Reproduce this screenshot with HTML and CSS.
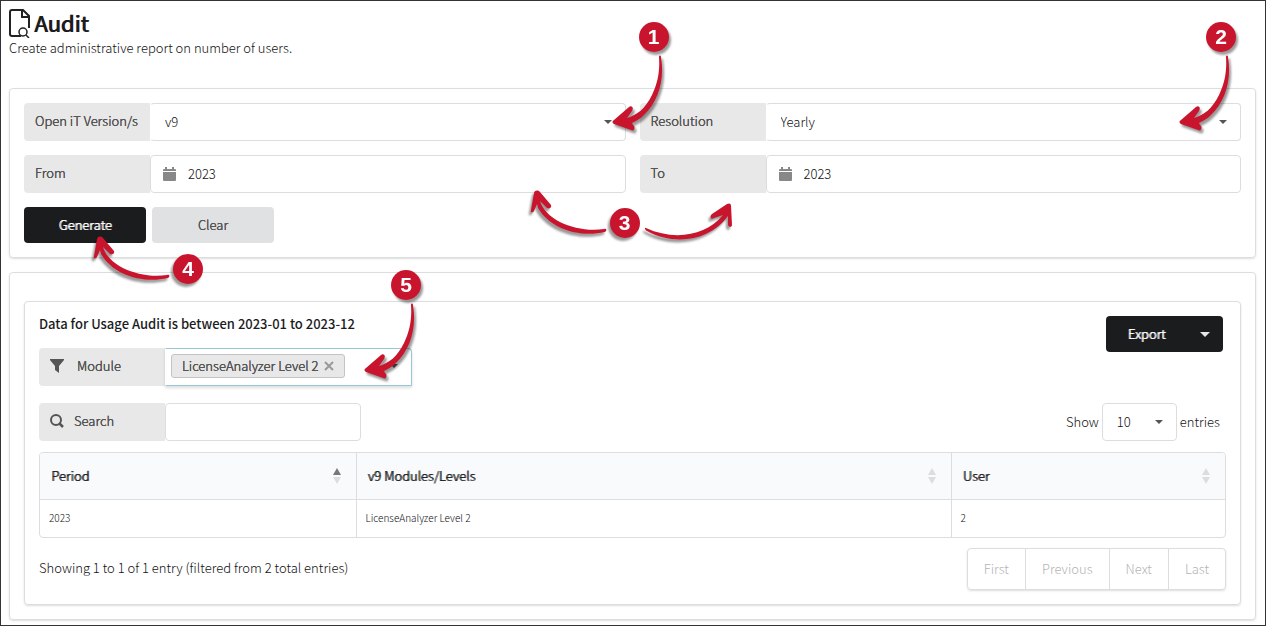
FILE: index.html
```html
<!DOCTYPE html>
<html lang="en">
<head>
    <meta charset="UTF-8">
    <meta name="viewport" content="width=device-width, initial-scale=1.0">
    <title>Audit</title>
    <link rel="stylesheet" href="styles.css">
</head>
<body>
    <!-- Shared shapes for the callouts and sort arrows -->
    <svg class="shapes" aria-hidden="true">
        <symbol id="arrow-down" viewBox="0 0 64 116">
            <path d="M48 35 C48 33 50 33 50 35 C54 58 47 80 33 93 C29 97 25 99 21 101 L22 103 C25 105 23 110 20 108 L3 102 C1 101 1 99 3 98 L18 85 C21 83 23 86 21 89 L16 96 C26 93 34 87 41 73 C47 61 49 48 48 35 Z"/>
        </symbol>
        <symbol id="arrow-left" viewBox="0 0 112 56">
            <path d="M75 43 C50 49 20 40 8 19 L7 15 L4 22 C3 24 0 24 1 21 L4 4 C5 1 8 1 10 3 L21 16 C22 19 19 20 17 19 L10 12 C16 32 48 44 74 40 C77 39 77 42 75 43 Z"/>
        </symbol>
        <symbol id="arrow-right" viewBox="0 0 90 40">
            <path d="M2 25 C0 24 1 27 3 28 C30 43 66 38 84 13 L84 22 C85 25 88 24 88 22 L87 3 C87 0 85 0 83 1 L68 11 C65 14 67 17 70 15 L79 12 C62 33 30 38 2 25 Z"/>
        </symbol>
        <symbol id="sort" viewBox="0 0 8 16">
            <path class="sort-up" d="M4 0 L8 7 H0 Z"/>
            <path class="sort-down" d="M0 9 H8 L4 16 Z"/>
        </symbol>
    </svg>

    <main class="page">
        <!-- Page Title -->
        <header class="page-header">
            <h1>
                <svg class="title-icon" viewBox="0 0 22 30" aria-hidden="true">
                    <path d="M12 28 H3 Q1 28 1 26 V4 Q1 2 3 2 H14 L20 8 V20" fill="none" stroke="#222" stroke-width="2"/>
                    <path d="M13 2 V9 H20" fill="none" stroke="#222" stroke-width="2"/>
                    <circle cx="14" cy="24" r="4" fill="#fff" stroke="#222" stroke-width="1.5"/>
                    <path d="M17 27 L20 30" stroke="#222" stroke-width="1.5"/>
                </svg>
                Audit
            </h1>
            <p>Create administrative report on number of users.</p>
        </header>

        <!-- Report Form -->
        <form class="card report-form">
            <div class="field-grid">
                <div class="field">
                    <label for="version">Open iT Version/s</label>
                    <div class="select-wrap">
                        <select id="version"><option>v9</option></select>
                    </div>
                    <div class="callout callout-version">
                        <svg class="arrow"><use href="#arrow-down"/></svg>
                        <span class="badge">1</span>
                    </div>
                </div>
                <div class="field">
                    <label for="resolution">Resolution</label>
                    <div class="select-wrap">
                        <select id="resolution"><option>Yearly</option></select>
                    </div>
                    <div class="callout callout-resolution">
                        <svg class="arrow"><use href="#arrow-down"/></svg>
                        <span class="badge">2</span>
                    </div>
                </div>
                <div class="field">
                    <label for="from">From</label>
                    <div class="date-wrap">
                        <svg class="calendar" viewBox="0 0 13 14" aria-hidden="true"><path d="M0 4 V3 Q0 2 1 2 H2 V0 H4 V2 H9 V0 H11 V2 H12 Q13 2 13 3 V4 Z M0 5 H13 V13 Q13 14 12 14 H1 Q0 14 0 13 Z"/></svg>
                        <input type="text" id="from" value="2023">
                    </div>
                </div>
                <div class="field">
                    <label for="to">To</label>
                    <div class="date-wrap">
                        <svg class="calendar" viewBox="0 0 13 14" aria-hidden="true"><path d="M0 4 V3 Q0 2 1 2 H2 V0 H4 V2 H9 V0 H11 V2 H12 Q13 2 13 3 V4 Z M0 5 H13 V13 Q13 14 12 14 H1 Q0 14 0 13 Z"/></svg>
                        <input type="text" id="to" value="2023">
                    </div>
                    <div class="callout callout-dates">
                        <svg class="arrow arrow-side"><use href="#arrow-left"/></svg>
                        <span class="badge">3</span>
                        <svg class="arrow arrow-right"><use href="#arrow-right"/></svg>
                    </div>
                </div>
            </div>
            <div class="actions">
                <button type="button" class="btn btn-dark">Generate</button>
                <button type="button" class="btn btn-light">Clear</button>
                <div class="callout callout-generate">
                    <svg class="arrow arrow-side"><use href="#arrow-left"/></svg>
                    <span class="badge">4</span>
                </div>
            </div>
        </form>

        <!-- Results -->
        <section class="card results">
            <div class="card panel">
                <div class="panel-top">
                    <div>
                        <h2>Data for Usage Audit is between 2023-01 to 2023-12</h2>
                        <div class="field module-field">
                            <label for="module">
                                <svg class="label-icon" viewBox="0 0 14 14" aria-hidden="true"><path d="M0 0 H14 V1 L9 7 V14 L5 11 V7 L0 1 Z"/></svg>
                                Module
                            </label>
                            <div class="multi-select">
                                <span class="tag">LicenseAnalyzer Level 2
                                    <button type="button" aria-label="Remove LicenseAnalyzer Level 2"><svg viewBox="0 0 10 10"><path d="M1 1 L9 9 M9 1 L1 9"/></svg></button>
                                </span>
                                <input type="text" id="module">
                            </div>
                            <div class="callout callout-module">
                                <svg class="arrow"><use href="#arrow-down"/></svg>
                                <span class="badge">5</span>
                            </div>
                        </div>
                    </div>
                    <div class="export">
                        <button type="button" class="btn-export">Export</button>
                        <button type="button" class="btn-export-menu" aria-label="Export options"></button>
                    </div>
                </div>

                <div class="table-tools">
                    <div class="field search-field">
                        <label for="search">
                            <svg class="label-icon" viewBox="0 0 14 14" aria-hidden="true"><circle cx="6" cy="6" r="5" fill="none" stroke="#555" stroke-width="2"/><path d="M9 9 L13 13" stroke="#555" stroke-width="2.5"/></svg>
                            Search
                        </label>
                        <input type="text" id="search">
                    </div>
                    <label class="page-size">
                        Show
                        <span class="select-wrap"><select><option>10</option></select></span>
                        entries
                    </label>
                </div>

                <div class="table-wrap">
                    <table>
                        <thead>
                            <tr>
                                <th class="col-period"><div class="head sorted">Period <svg class="sort"><use href="#sort"/></svg></div></th>
                                <th class="col-modules"><div class="head">v9 Modules/Levels <svg class="sort"><use href="#sort"/></svg></div></th>
                                <th><div class="head">User <svg class="sort"><use href="#sort"/></svg></div></th>
                            </tr>
                        </thead>
                        <tbody>
                            <tr>
                                <td>2023</td>
                                <td>LicenseAnalyzer Level 2</td>
                                <td>2</td>
                            </tr>
                        </tbody>
                    </table>
                </div>

                <div class="table-footer">
                    <p>Showing 1 to 1 of 1 entry (filtered from 2 total entries)</p>
                    <nav class="pagination">
                        <button type="button" disabled>First</button>
                        <button type="button" disabled>Previous</button>
                        <button type="button" disabled>Next</button>
                        <button type="button" disabled>Last</button>
                    </nav>
                </div>
            </div>
        </section>
    </main>
</body>
</html>
```
FILE: styles.css
```css
/* General Reset */
* {
    box-sizing: border-box;
}

body, h1, h2, p {
    margin: 0;
}

body, button, input, select {
    font-family: "Noto Sans CJK SC", "Noto Sans", sans-serif;
    font-size: 13px;
    font-weight: 300;
    line-height: 20px;
    color: #111;
}

.shapes {
    position: absolute;
    width: 0;
    height: 0;
}

.page {
    min-height: 100vh;
    padding: 7px 9px 5px 8px;
    border: 1px solid #333;
    background: #fff;
}

/* Page Title */
.page-header {
    height: 80px;
}

h1 {
    display: flex;
    gap: 3px;
    height: 30px;
    font-size: 22px;
    font-weight: 400;
    line-height: 28px;
    color: #1b1c1d;
    text-shadow: 1px 0 0 currentColor;
}

.title-icon {
    width: 22px;
    height: 30px;
}

/* Cards */
.card {
    border: 1px solid #dcddde;
    border-radius: 4px;
    box-shadow: 0 1px 2px rgba(34, 36, 38, 0.15);
    padding: 14px;
}

.results {
    margin-top: 14px;
    padding-top: 28px;
}

/* Fields */
.field-grid {
    display: grid;
    grid-template-columns: 1fr 1fr;
    gap: 14px;
}

.field {
    position: relative;
    display: flex;
    height: 38px;
}

.field > label {
    display: flex;
    align-items: center;
    flex: 0 0 126px;
    padding: 0 11px 2px;
    border-radius: 4px 0 0 4px;
    background: #e8e8e8;
    white-space: nowrap;
}

/* Semi-bold look on the narrow light weight */
.field > label, .tag, .btn-light {
    color: #555;
    text-shadow: 0 0 0 currentColor, 0 0 0 currentColor;
}

.label-icon {
    flex: none;
    width: 14px;
    height: 14px;
    margin-right: 13px;
    fill: #555;
}

input, select {
    border: 1px solid #dcddde;
    border-radius: 4px;
    background: #fff;
    outline: none;
}

.select-wrap {
    position: relative;
    flex: 1;
}

.select-wrap select {
    appearance: none;
    width: 100%;
    height: 38px;
    padding: 0 14px;
    border-left-color: transparent;
}

.select-wrap::after, .multi-select::after, .btn-export-menu::after {
    content: "";
    border: 4px solid transparent;
    border-top-color: #555;
    border-bottom: 0;
}

.select-wrap::after {
    position: absolute;
    top: 17px;
    right: 14px;
}

.date-wrap {
    position: relative;
    flex: 1;
}

.date-wrap input {
    width: 100%;
    height: 38px;
    padding: 0 14px 2px 37px;
}

.calendar {
    position: absolute;
    top: 12px;
    left: 13px;
    width: 13px;
    height: 14px;
    fill: #888;
}

/* Buttons */
.actions {
    position: relative;
    display: flex;
    gap: 6px;
    margin-top: 14px;
}

button {
    border: 0;
    padding: 0;
    background: none;
}

.btn {
    width: 122px;
    height: 36px;
    border-radius: 4px;
}

.btn-dark {
    background: #1b1c1d;
}

.btn-dark, .btn-export {
    color: #fff;
    text-shadow: 1px 0 0 currentColor;
}

.btn-light {
    background: #e0e1e2;
}

/* Results Panel */
.panel-top, .table-tools, .table-footer {
    display: flex;
    justify-content: space-between;
    align-items: flex-start;
}

h2 {
    padding-bottom: 16px;
    font-size: 13px;
    font-weight: 500;
    line-height: 16px;
    color: #1b1c1d;
}

.module-field {
    width: 373px;
}

.multi-select {
    display: flex;
    align-items: center;
    flex: 1;
    min-width: 0;
    padding: 0 13px 2px 5px;
    border: 1px solid #96c8da;
    border-left-color: transparent;
    border-radius: 0 4px 0 0;
    box-shadow: 0 2px 3px rgba(34, 36, 38, 0.15);
}

.multi-select input {
    flex: 1;
    min-width: 0;
    border: 0;
}

.tag {
    display: flex;
    align-items: center;
    flex: none;
    gap: 5px;
    height: 24px;
    padding: 0 10px;
    border: 1px solid #c4c4c4;
    border-radius: 3px;
    background: #e8e8e8;
}

.tag button {
    display: flex;
}

.tag svg {
    width: 10px;
    height: 10px;
    stroke: #999;
    stroke-width: 2;
}

.export {
    display: flex;
    height: 36px;
    margin-right: 3px;
    border-radius: 4px;
    background: #1b1c1d;
}

.btn-export {
    width: 81px;
}

.btn-export-menu {
    display: flex;
    align-items: center;
    justify-content: center;
    width: 36px;
}

.btn-export-menu::after {
    border-width: 5px 5px 0;
    border-top-color: #e8e8e8;
}

/* Table Tools */
.table-tools {
    margin-top: 17px;
}

.search-field {
    width: 322px;
}

.search-field .label-icon {
    margin-right: 10px;
}

.search-field input {
    flex: 1;
    min-width: 0;
}

.page-size {
    display: flex;
    align-items: center;
    gap: 3px;
    margin-right: 6px;
}

.page-size .select-wrap {
    flex: 0 0 75px;
}

.page-size select {
    border-color: #dcddde;
}

/* Table */
.table-wrap {
    margin-top: 11px;
    border: 1px solid #dcddde;
    border-radius: 4px;
    overflow: hidden;
}

table {
    width: 100%;
    table-layout: fixed;
    border-collapse: collapse;
}

.col-period {
    width: 316px;
}

.col-modules {
    width: 595px;
}

th {
    height: 46px;
    padding: 0 15px 0 11px;
    border-bottom: 1px solid #dcddde;
    background: #f9fafb;
    font-weight: 300;
    text-align: left;
    color: #1b1c1d;
    text-shadow: 1px 0 0 currentColor;
}

td {
    height: 38px;
    padding: 0 9px;
    font-size: 10px;
}

th + th, td + td {
    border-left: 1px solid #dcddde;
}

.head {
    display: flex;
    align-items: center;
    justify-content: space-between;
}

.sort {
    width: 8px;
    height: 16px;
    fill: #dcdddd;
}

.sorted .sort {
    --up: #777;
}

.sort-up {
    fill: var(--up, #dcdddd);
}

/* Table Footer */
.table-footer {
    margin-top: 10px;
}

.table-footer p {
    padding-top: 10px;
}

.pagination {
    display: flex;
    height: 42px;
    border: 1px solid #dcddde;
    border-radius: 4px;
    box-shadow: 0 1px 2px rgba(34, 36, 38, 0.15);
}

.pagination button {
    padding: 0 16px;
    color: #b4b4b4;
}

.pagination button + button {
    border-left: 1px solid #dcddde;
}

/* Numbered Callouts */
.callout {
    position: absolute;
    z-index: 2;
    width: 64px;
    height: 116px;
    pointer-events: none;
    filter: drop-shadow(2px 3px 1px rgba(0, 0, 0, 0.4));
}

.arrow {
    position: absolute;
    inset: 0;
    width: 64px;
    height: 116px;
    fill: #c8152d;
}

.badge {
    position: absolute;
    top: 0;
    left: 28px;
    width: 30px;
    height: 30px;
    border-radius: 50%;
    background: #c8152d;
    color: #fff;
    font: bold 21px/30px "Liberation Sans", Arial, sans-serif;
    text-align: center;
}

.callout-version {
    top: -81px;
    right: -49px;
}

.callout-resolution {
    top: -81px;
    right: -1px;
}

.callout-module {
    top: -78px;
    right: -15px;
}

.callout-dates, .callout-generate {
    width: 112px;
    height: 56px;
    filter: drop-shadow(-2px 3px 1px rgba(0, 0, 0, 0.4));
}

.callout-dates {
    top: 34px;
    left: -110px;
}

.callout-generate {
    top: 28px;
    left: 69px;
}

.arrow-side {
    width: 112px;
    height: 56px;
}

.arrow-right {
    top: 14px;
    left: 114px;
    width: 90px;
    height: 40px;
}

.callout-dates .badge, .callout-generate .badge {
    top: 19px;
    left: 80px;
}
```
